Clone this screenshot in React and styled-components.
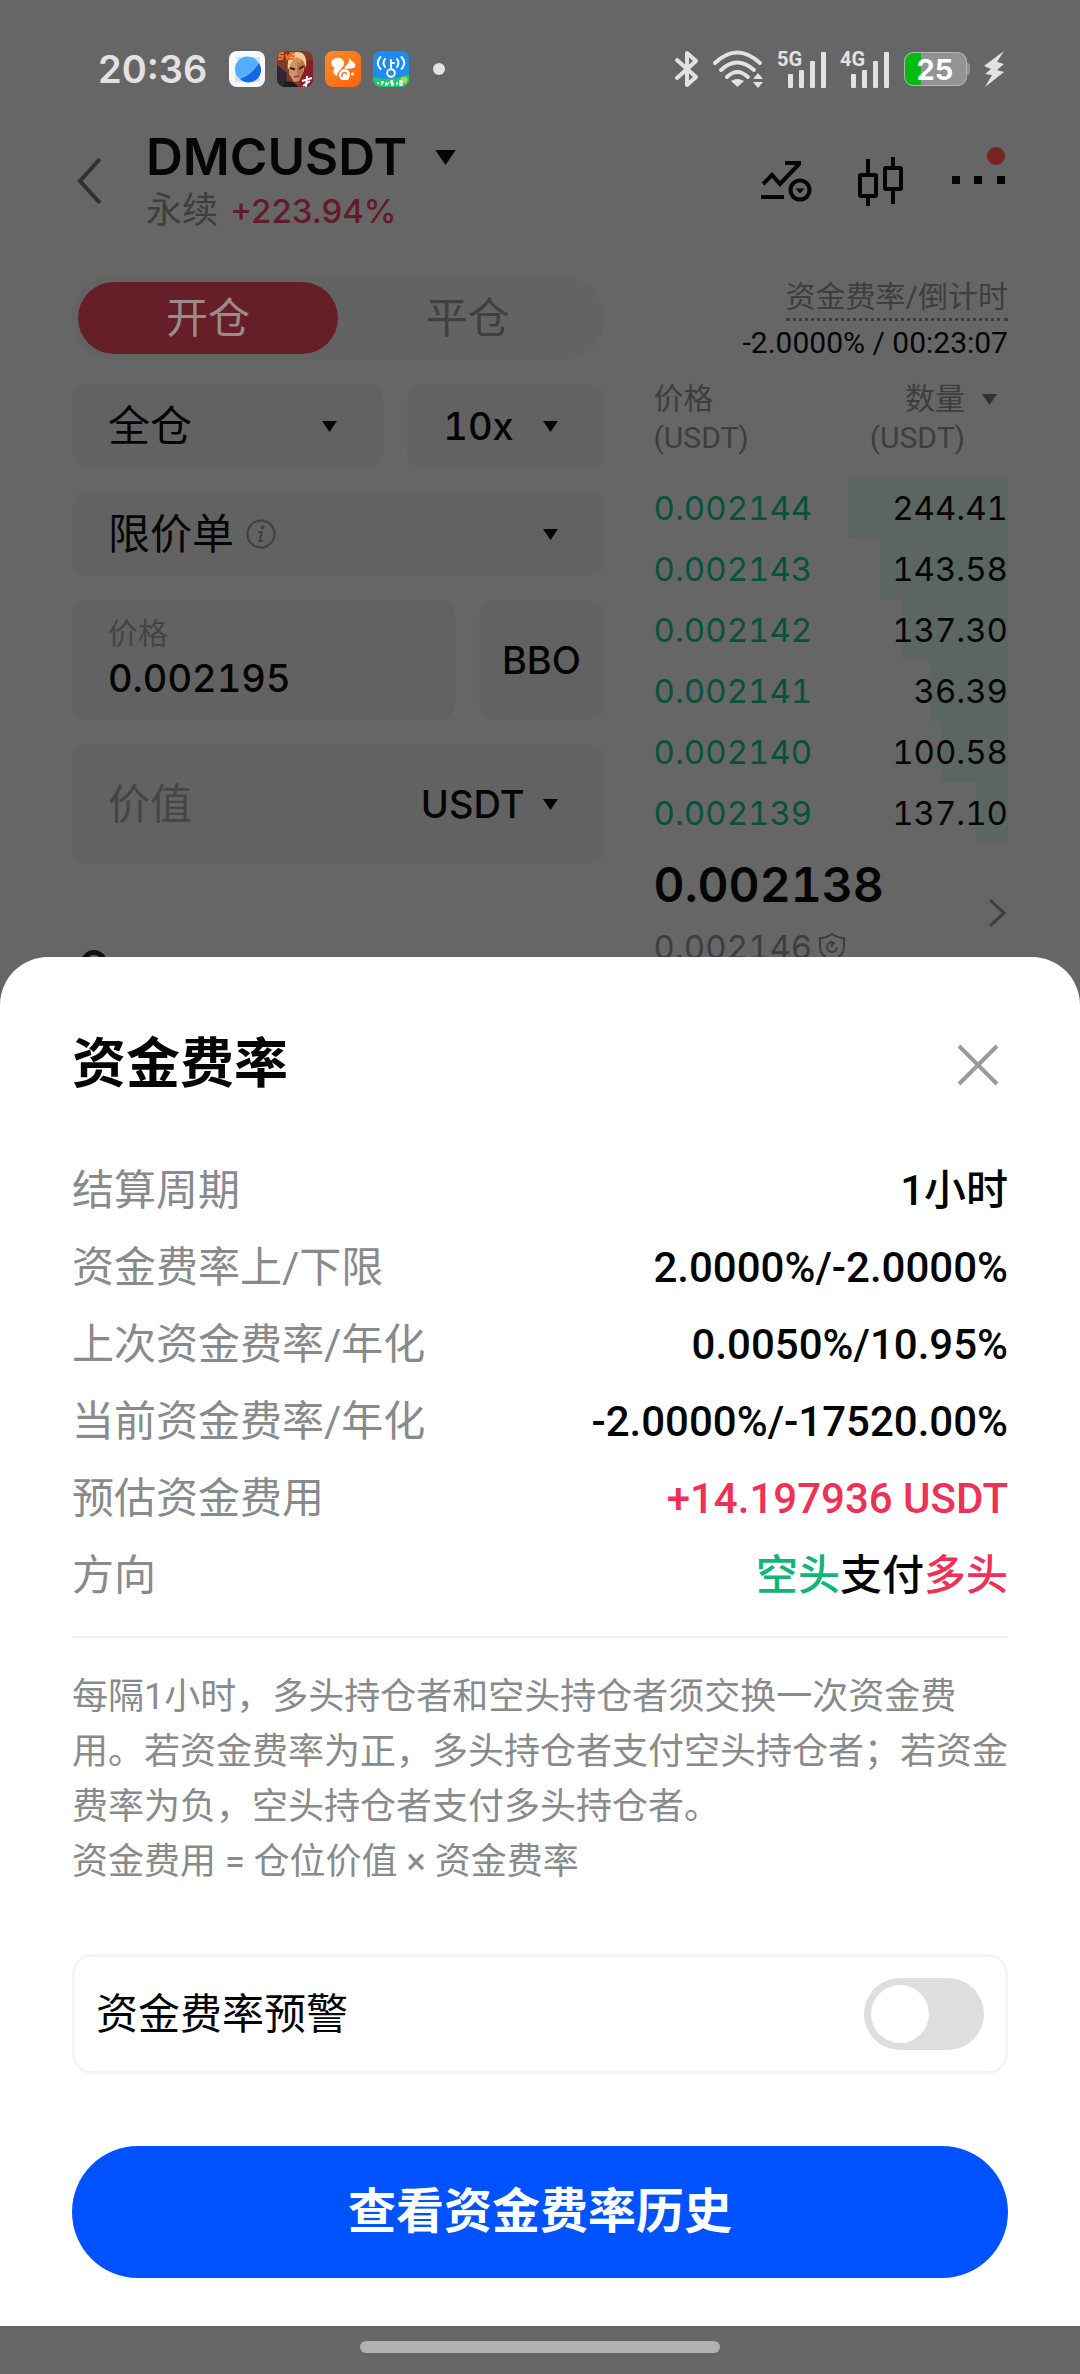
import React, { useState } from "react";
import styled, { createGlobalStyle } from "styled-components";

const GlobalStyle = createGlobalStyle`
  * {
    box-sizing: border-box;
  }
  body {
    margin: 0;
    background: #666666;
    font-family: Roboto, "Noto Sans CJK SC", sans-serif;
    color: #050505;
  }
  button, input {
    font-family: inherit;
    color: inherit;
    border: none;
    background: none;
    padding: 0;
    margin: 0;
  }
  h1, h2, p, dl, dd, dt {
    margin: 0;
  }
  svg {
    display: block;
    flex: none;
    overflow: visible;
  }
`;

const Page = styled.div`
  min-height: 100vh;
  overflow: hidden;
`;

/* status bar */

const StatusBar = styled.div`
  display: flex;
  justify-content: space-between;
  align-items: center;
  height: 116px;
  padding: 22px 76px 0 98px;
  color: #e2e2e2;
`;

const StatusGroup = styled.div`
  display: flex;
  align-items: center;
  gap: ${(props) => props.$gap}px;
`;

const Time = styled.span`
  font-family: Inter, sans-serif;
  font-size: 38px;
  font-weight: 600;
  margin-right: 10px;
`;

const Dot = styled.span`
  width: 12px;
  height: 12px;
  margin-left: 12px;
  border-radius: 50%;
  background: #e2e2e2;
`;

/* header */

const Header = styled.header`
  display: flex;
  align-items: center;
  height: 130px;
  padding: 0 74px 0 72px;
`;

const IconButton = styled.button`
  display: flex;
  cursor: pointer;
`;

const Pair = styled.div`
  flex: 1;
  padding-left: 38px;
`;

const PairName = styled.h1`
  display: flex;
  align-items: center;
  gap: 28px;
  font-family: Inter, sans-serif;
  font-size: 51px;
  font-weight: 600;
  line-height: 60px;
`;

const PairInfo = styled.p`
  display: flex;
  gap: 12px;
  font-size: 36px;
  line-height: 48px;
  color: #3c3e3f;
`;

const Change = styled.span`
  font-family: Inter, sans-serif;
  font-size: 33px;
  font-weight: 500;
  color: #641a2b;
`;

const HeaderIcons = styled.div`
  display: flex;
  align-items: center;
  gap: 46px;
`;

/* trade area */

const Trade = styled.main`
  display: grid;
  grid-template-columns: minmax(0, 3fr) minmax(0, 2fr);
  column-gap: 50px;
  padding: 30px 72px 0;
`;

const Form = styled.div`
  display: flex;
  flex-direction: column;
  gap: 24px;
`;

const Tabs = styled.div`
  display: flex;
  padding: 6px;
  border-radius: 42px;
  background: #636363;
`;

const Tab = styled.button`
  flex: 1;
  height: 72px;
  border-radius: 36px;
  font-size: 42px;
  line-height: 53px;
  background: ${(props) => (props.$active ? "#661e28" : "none")};
  color: ${(props) => (props.$active ? "#9a8b8c" : "#3e4041")};
`;

const FormRow = styled.div`
  display: grid;
  grid-template-columns: ${(props) => props.$cols};
  gap: 24px;
`;

const Field = styled.button`
  display: flex;
  align-items: center;
  justify-content: space-between;
  height: 84px;
  padding: 0 46px 0 36px;
  border-radius: 16px;
  background: #626262;
  font-size: 42px;
  line-height: 53px;
`;

const FieldText = styled.span`
  display: flex;
  align-items: center;
  gap: 12px;
`;

const Latin = styled.span`
  font-family: Inter, sans-serif;
  font-size: 38px;
  font-weight: 500;
  font-feature-settings: "tnum";
`;

const InputBox = styled.label`
  display: flex;
  flex-direction: column;
  justify-content: center;
  height: 120px;
  padding: 0 36px;
  border-radius: 16px;
  background: #626262;
  font-size: 30px;
  line-height: 36px;
  color: #434646;
`;

const PriceInput = styled.input`
  width: 100%;
  height: 52px;
  font-family: Inter, sans-serif;
  font-size: 38px;
  font-weight: 500;
  font-feature-settings: "tnum";
  line-height: 52px;
  color: #050505;
`;

const BboButton = styled.button`
  border-radius: 16px;
  background: #626262;
`;

const AmountBox = styled.div`
  display: flex;
  align-items: center;
  height: 120px;
  padding: 0 46px 0 36px;
  border-radius: 16px;
  background: #626262;
`;

const AmountInput = styled.input`
  flex: 1;
  min-width: 0;
  font-size: 42px;
  &::placeholder {
    color: #434646;
    opacity: 1;
  }
`;

const Unit = styled.button`
  display: flex;
  align-items: center;
  gap: 18px;
`;

const Slider = styled.input`
  appearance: none;
  width: 100%;
  height: 26px;
  margin-top: 62px;
  padding: 0 9px;
  &::-webkit-slider-thumb {
    appearance: none;
    width: 26px;
    height: 26px;
    border: 5px solid #111111;
    border-radius: 50%;
    background: #666666;
  }
`;

/* order book */

const Book = styled.div`
  display: flex;
  flex-direction: column;
`;

const Funding = styled.div`
  display: flex;
  flex-direction: column;
  align-items: flex-end;
  font-size: 30px;
  line-height: 36px;
`;

const FundingLink = styled.a`
  margin-bottom: 4px;
  border-bottom: 3px dotted #3c3e3f;
  color: #3c3e3f;
  line-height: 42px;
  text-decoration: none;
`;

const BookTable = styled.table`
  width: 100%;
  margin-top: 18px;
  border-collapse: collapse;
`;

const HeadCell = styled.th`
  padding: 0 0 20px;
  font-size: 30px;
  font-weight: 400;
  line-height: 39px;
  vertical-align: top;
  text-align: left;
  color: #3c3e3f;
`;

const SortButton = styled.button`
  display: flex;
  gap: 17px;
  margin-left: auto;
  padding-right: 11px;
  font-size: 30px;
  line-height: 39px;
  text-align: right;
  svg {
    margin-top: 15px;
  }
`;

const BookRow = styled.tr`
  height: 61px;
  background: linear-gradient(#5b6561, #5b6561) right / 0 100% no-repeat;
  font-family: Inter, sans-serif;
  font-size: 33px;
  font-feature-settings: "tnum";
`;

const Cell = styled.td`
  padding: 0;
  text-align: ${(props) => (props.$right ? "right" : "left")};
  color: ${(props) => (props.$right ? "#050505" : "#06523a")};
`;

const LastPrice = styled.div`
  display: flex;
  align-items: center;
  justify-content: space-between;
  padding-top: 8px;
`;

const Last = styled.p`
  font-family: Inter, sans-serif;
  font-size: 48px;
  font-weight: 600;
  font-feature-settings: "tnum";
  line-height: 68px;
`;

const Mark = styled.p`
  display: flex;
  align-items: center;
  gap: 6px;
  font-family: Inter, sans-serif;
  font-size: 33px;
  font-feature-settings: "tnum";
  line-height: 56px;
  color: #3c3e3f;
`;

/* bottom sheet */

const SheetLayer = styled.div`
  position: fixed;
  left: 0;
  right: 0;
  bottom: 0;
  background: #666666;
  border-radius: 48px 48px 0 0;
`;

const Sheet = styled.section`
  padding: 74px 72px 48px;
  border-radius: 48px 48px 0 0;
  background: #ffffff;
`;

const SheetHead = styled.div`
  display: flex;
  align-items: center;
  justify-content: space-between;
  padding-right: 9px;
`;

const SheetTitle = styled.h2`
  font-size: 54px;
  font-weight: 700;
  line-height: 68px;
`;

const Rows = styled.dl`
  display: flex;
  flex-direction: column;
  gap: 24px;
  padding: 65px 0 34px;
  border-bottom: 2px solid #f1f1f1;
`;

const Row = styled.div`
  display: flex;
  justify-content: space-between;
  font-size: 42px;
  line-height: 53px;
`;

const Label = styled.dt`
  color: #888a8b;
`;

const Value = styled.dd`
  font-weight: 500;
  color: ${(props) => (props.$up ? "#ee3157" : "#050505")};
`;

const Side = styled.span`
  color: ${(props) => (props.$short ? "#12b47c" : "#ee3157")};
`;

const Note = styled.p`
  margin-top: 32px;
  font-size: 36px;
  line-height: 55px;
  color: #888a8b;
`;

const AlertCard = styled.label`
  display: flex;
  align-items: center;
  justify-content: space-between;
  height: 120px;
  margin-top: 64px;
  padding: 0 21px;
  border: 3px solid #f4f5f5;
  border-radius: 20px;
  font-size: 42px;
  line-height: 53px;
  cursor: pointer;
`;

const Switch = styled.input`
  appearance: none;
  display: flex;
  width: 120px;
  height: 72px;
  padding: 7px;
  border-radius: 36px;
  background: ${(props) => (props.checked ? "#0052ff" : "#dcdee0")};
  &::before {
    content: "";
    width: 58px;
    height: 58px;
    border-radius: 50%;
    background: #ffffff;
    margin-left: ${(props) => (props.checked ? "auto" : "0")};
  }
`;

const HistoryButton = styled.button`
  width: 100%;
  height: 132px;
  margin-top: 72px;
  border-radius: 66px;
  background: #0052ff;
  color: #ffffff;
  font-size: 48px;
  font-weight: 700;
  line-height: 60px;
`;

const HomeBar = styled.div`
  display: flex;
  justify-content: center;
  height: 48px;
  padding-top: 15px;
  &::before {
    content: "";
    width: calc(100% / 3);
    height: 12px;
    border-radius: 6px;
    background: #b2b2b2;
  }
`;

/* icons */

const Caret = ({ w = 15, color = "#050505" }) => (
  <svg width={w} height={Math.round(w * 0.73)} viewBox="0 0 15 11">
    <path d="M0 0H15L7.5 11Z" fill={color} />
  </svg>
);

const BrowserIcon = () => (
  <svg width="36" height="36" viewBox="0 0 36 36">
    <rect width="36" height="36" rx="8" fill="#f6faff" />
    <path d="M6 6H15V15ZM31 31H22L30 22ZM6 31V20L15 31ZM31 6V16L22 6Z" fill="#cfe5fd" />
    <circle cx="18.500" cy="18" r="12.500" fill="#57aef8" />
    <path d="M30 12A12.500 12.500 0 0 1 11 28Q23 24 30 12Z" fill="#1766e6" />
  </svg>
);

const GameIcon = () => (
  <svg width="36" height="36" viewBox="0 0 36 36">
    <clipPath id="game">
      <rect width="36" height="36" rx="8" />
    </clipPath>
    <g clipPath="url(#game)">
      <rect width="36" height="36" fill="#7d3b26" />
      <path d="M0 14L10 22L9 36H0Z" fill="#2b2534" />
      <path d="M27 12L36 8V36H22Z" fill="#8a1c26" />
      <path d="M12 9Q20 2 28 9L27 20L22 30L17 31L12 23Z" fill="#d09068" />
      <path d="M20 12L27 10L26 21L21 30L20 22Z" fill="#b97450" />
      <path d="M11 19Q9 5 19 1Q31 0 29 17L26 9L19 6L14 12Z" fill="#ecd096" />
      <path d="M13 17L18 18.500M22 18L27 15" stroke="#3d1a14" strokeWidth="2" />
      <path d="M17 26L22 25" stroke="#8c3f33" strokeWidth="1.500" />
      <path d="M8 30L16 31L22 36H6Z" fill="#1c1a22" />
      <path d="M7 2H3L2 5H6L5 8H1M9 3L10 8L13 3M18 2H14L13 5H17L16 8H12" stroke="#f5702a" strokeWidth="1.800" fill="none" />
      <path d="M25 30L35 27M30 25L29 36M26 35L33 30" stroke="#ffffff" strokeWidth="2" />
    </g>
  </svg>
);

const SquirrelIcon = () => (
  <svg width="36" height="36" viewBox="0 0 36 36">
    <linearGradient id="squirrel" x1="0" y1="0" x2="1" y2="1">
      <stop offset="0" stopColor="#ff8a2a" />
      <stop offset="1" stopColor="#ff6210" />
    </linearGradient>
    <rect width="36" height="36" rx="8" fill="url(#squirrel)" />
    <g fill="#ffffff">
      <path d="M10 17C5 15 5 8 11 7C16 6 20 9 19 14C17 18 13 19 12 25C8 23 7 20 10 17Z" />
      <path d="M19 17L24 11V7L27 10C30 12 31 14 30 16C28 18 25 17 22 18Z" />
      <path d="M14 24C14 18 21 16 24 20C26 23 25 26 23 29H17C15 28 14 26 14 24Z" />
      <circle cx="27.500" cy="23" r="1.500" />
    </g>
    <path d="M17 26C16 22 20 20 22 23" stroke="#ff7a1c" strokeWidth="1.500" fill="none" />
  </svg>
);

const WifiKeyIcon = () => (
  <svg width="36" height="36" viewBox="0 0 36 36">
    <clipPath id="key">
      <rect width="36" height="36" rx="8" />
    </clipPath>
    <g clipPath="url(#key)">
      <rect width="36" height="36" fill="#1b8df0" />
      <path d="M0 26Q18 31 36 23V36H0Z" fill="#25c46c" />
      <circle cx="31" cy="29" r="3.500" fill="#a5d84c" />
      <g stroke="#ffffff" strokeWidth="2" fill="none" strokeLinecap="round">
        <circle cx="18" cy="22" r="3.800" />
        <path d="M18 18V9M18 12H21" />
        <path d="M12 8Q9 12 12 16M7.500 6Q2 12 7.500 18M24 8Q27 12 24 16M28.500 6Q34 12 28.500 18" />
      </g>
      <path d="M4 32H6M9 31V34M8 31H11M13 31V35M16 31L14 34M20 30H18V32H20V34H18M24 31V34M27 30H29V34H27Z" stroke="#ffffff" strokeWidth="1.300" fill="none" />
    </g>
  </svg>
);

const BluetoothIcon = () => (
  <svg width="24" height="38" viewBox="0 0 24 38">
    <path d="M2 10L21 27L12 35V3L21 11L2 28" fill="none" stroke="#e2e2e2" strokeWidth="4" strokeLinejoin="round" strokeLinecap="round" />
  </svg>
);

const WifiIcon = () => (
  <svg width="51" height="38" viewBox="0 0 51 38">
    <g fill="none" stroke="#e2e2e2" strokeWidth="4" strokeLinecap="round">
      <path d="M2 13Q24 -8 47 13" />
      <path d="M8 20Q24 5 41 20" />
      <path d="M14 27Q24 17 35 27" />
    </g>
    <path d="M18 31Q24 27 31 31L24.500 37Z" fill="#e2e2e2" />
    <path d="M40 29L45 23L50 29ZM40 32H50L45 38Z" fill="#e2e2e2" />
  </svg>
);

const SignalText = styled.text`
  font-family: Roboto, sans-serif;
  font-size: 20px;
  font-weight: 700;
`;

const SignalIcon = ({ label }) => (
  <svg width="49" height="38" viewBox="0 0 49 38" fill="#e2e2e2">
    <SignalText x="-1" y="16">
      {label}
    </SignalText>
    <rect x="10" y="24" width="5" height="14" rx="1" />
    <rect x="21" y="20" width="5" height="18" rx="1" />
    <rect x="32" y="11" width="5" height="27" rx="1" />
    <rect x="43" y="2" width="5" height="36" rx="1" />
  </svg>
);

const BatteryText = styled.text`
  font-family: Inter, sans-serif;
  font-size: 29px;
  font-weight: 700;
`;

const BatteryIcon = () => (
  <svg width="66" height="34" viewBox="0 0 66 34">
    <clipPath id="cell">
      <rect width="63" height="34" rx="9" />
    </clipPath>
    <rect width="63" height="34" rx="9" fill="#939393" />
    <path d="M63 11Q66 11 66 14V20Q66 23 63 23Z" fill="#939393" />
    <rect width="17" height="34" fill="#03bb12" clipPath="url(#cell)" />
    <rect x="0.500" y="0.500" width="62" height="33" rx="9" fill="none" stroke="#b4b4b4" />
    <BatteryText x="31" y="28" textAnchor="middle" fill="#ffffff">
      25
    </BatteryText>
  </svg>
);

const BoltIcon = () => (
  <svg width="20" height="36" viewBox="0 0 20 36">
    <path d="M20 0L0 15L7 18L1 23L8 24L1 36L20 21L13 19L20 13L13 11Z" fill="#e2e2e2" />
  </svg>
);

const BackIcon = () => (
  <svg width="36" height="48" viewBox="0 0 36 48">
    <path d="M28 2L8 24L28 46" fill="none" stroke="#2f3132" strokeWidth="4" />
  </svg>
);

const TrendIcon = () => (
  <svg width="52" height="50" viewBox="0 0 52 50" fill="none" stroke="#050505" strokeWidth="4">
    <path d="M3 28L12 19L20 28L40 7M25 7H41" />
    <path d="M1 41H24" />
    <circle cx="40" cy="34" r="9.500" />
    <path d="M35.500 32.500H44.500L40 37.500Z" fill="#050505" stroke="none" />
  </svg>
);

const CandleIcon = () => (
  <svg width="46" height="50" viewBox="0 0 46 50" fill="none" stroke="#050505" strokeWidth="4">
    <rect x="2" y="19" width="16" height="21" rx="1" />
    <rect x="27" y="12" width="16" height="21" rx="1" />
    <path d="M10 3V19M10 40V50M35 1V12M35 33V48" />
  </svg>
);

const MoreIcon = () => (
  <svg width="56" height="50" viewBox="0 0 56 50">
    <path d="M2 20H10V28H2ZM24 20H32V28H24ZM47 20H55V28H47Z" fill="#050505" />
    <circle cx="46" cy="0" r="9" fill="#762522" />
  </svg>
);

const InfoIcon = () => (
  <svg width="30" height="30" viewBox="0 0 30 30" fill="none" stroke="#3e4041" strokeWidth="2">
    <circle cx="15" cy="15" r="13.500" />
    <path d="M12 13H16L13.500 22H17" />
    <circle cx="16.500" cy="8.500" r="1" />
  </svg>
);

const ChevronIcon = () => (
  <svg width="20" height="30" viewBox="0 0 20 30">
    <path d="M2 2L16 15L2 28" fill="none" stroke="#3c3e3f" strokeWidth="3" />
  </svg>
);

const ShieldIcon = () => (
  <svg width="28" height="30" viewBox="0 0 28 30" fill="none" stroke="#3c3e3f" strokeWidth="2">
    <path d="M14 2Q20 6 26 6V15Q26 24 14 29Q2 24 2 15V6Q8 6 14 2Z" />
    <path d="M14 10A5 5 0 1 0 19 15M14 15V10L17 12" />
  </svg>
);

const CloseIcon = () => (
  <svg width="42" height="42" viewBox="0 0 42 42">
    <path d="M2 2L40 40M40 2L2 40" stroke="#999b9c" strokeWidth="4" />
  </svg>
);

const bids = [
  { price: "0.002144", qty: "244.41", depth: 45 },
  { price: "0.002143", qty: "143.58", depth: 36 },
  { price: "0.002142", qty: "137.30", depth: 30 },
  { price: "0.002141", qty: "36.39", depth: 22 },
  { price: "0.002140", qty: "100.58", depth: 19 },
  { price: "0.002139", qty: "137.10", depth: 9 },
];

const details = [
  { label: "结算周期", value: "1小时" },
  { label: "资金费率上/下限", value: "2.0000%/-2.0000%" },
  { label: "上次资金费率/年化", value: "0.0050%/10.95%" },
  { label: "当前资金费率/年化", value: "-2.0000%/-17520.00%" },
  { label: "预估资金费用", value: "+14.197936 USDT", up: true },
];

export default function App() {
  const [price, setPrice] = useState("0.002195");
  const [alert, setAlert] = useState(false);

  return (
    <>
      <GlobalStyle />
      <Page>
        <StatusBar>
          <StatusGroup $gap={12}>
            <Time>20:36</Time>
            <BrowserIcon />
            <GameIcon />
            <SquirrelIcon />
            <WifiKeyIcon />
            <Dot />
          </StatusGroup>
          <StatusGroup $gap={14}>
            <BluetoothIcon />
            <WifiIcon />
            <SignalIcon label="5G" />
            <SignalIcon label="4G" />
            <BatteryIcon />
            <BoltIcon />
          </StatusGroup>
        </StatusBar>

        <Header>
          <IconButton aria-label="返回">
            <BackIcon />
          </IconButton>
          <Pair>
            <PairName>
              DMCUSDT
              <Caret w={21} />
            </PairName>
            <PairInfo>
              永续 <Change>+223.94%</Change>
            </PairInfo>
          </Pair>
          <HeaderIcons>
            <IconButton aria-label="走势">
              <TrendIcon />
            </IconButton>
            <IconButton aria-label="K线">
              <CandleIcon />
            </IconButton>
            <IconButton aria-label="更多">
              <MoreIcon />
            </IconButton>
          </HeaderIcons>
        </Header>

        <Trade>
          <Form>
            <Tabs>
              <Tab $active>开仓</Tab>
              <Tab>平仓</Tab>
            </Tabs>
            <FormRow $cols="311fr 196fr">
              <Field>
                全仓 <Caret />
              </Field>
              <Field>
                <Latin>10x</Latin> <Caret />
              </Field>
            </FormRow>
            <Field>
              <FieldText>
                限价单 <InfoIcon />
              </FieldText>
              <Caret />
            </Field>
            <FormRow $cols="382fr 124fr">
              <InputBox>
                价格
                <PriceInput value={price} onChange={(e) => setPrice(e.target.value)} />
              </InputBox>
              <BboButton>
                <Latin>BBO</Latin>
              </BboButton>
            </FormRow>
            <AmountBox>
              <AmountInput placeholder="价值" aria-label="价值" />
              <Unit>
                <Latin>USDT</Latin> <Caret />
              </Unit>
            </AmountBox>
            <Slider type="range" min="0" max="100" step="25" defaultValue="0" aria-label="仓位比例" />
          </Form>

          <Book>
            <Funding>
              <FundingLink href="#funding">资金费率/倒计时</FundingLink>
              -2.0000% / 00:23:07
            </Funding>
            <BookTable>
              <thead>
                <tr>
                  <HeadCell>
                    价格
                    <br />
                    (USDT)
                  </HeadCell>
                  <HeadCell>
                    <SortButton>
                      <span>
                        数量
                        <br />
                        (USDT)
                      </span>
                      <Caret color="#303233" />
                    </SortButton>
                  </HeadCell>
                </tr>
              </thead>
              <tbody>
                {bids.map((bid) => (
                  <BookRow key={bid.price} style={{ backgroundSize: `${bid.depth}% 100%` }}>
                    <Cell>{bid.price}</Cell>
                    <Cell $right>{bid.qty}</Cell>
                  </BookRow>
                ))}
              </tbody>
            </BookTable>
            <LastPrice>
              <div>
                <Last>0.002138</Last>
                <Mark>
                  0.002146
                  <ShieldIcon />
                </Mark>
              </div>
              <ChevronIcon />
            </LastPrice>
          </Book>
        </Trade>
      </Page>

      <SheetLayer id="funding">
        <Sheet>
          <SheetHead>
            <SheetTitle>资金费率</SheetTitle>
            <IconButton aria-label="关闭">
              <CloseIcon />
            </IconButton>
          </SheetHead>
          <Rows>
            {details.map((item) => (
              <Row key={item.label}>
                <Label>{item.label}</Label>
                <Value $up={item.up}>{item.value}</Value>
              </Row>
            ))}
            <Row>
              <Label>方向</Label>
              <Value>
                <Side $short>空头</Side>支付<Side>多头</Side>
              </Value>
            </Row>
          </Rows>
          <Note>
            每隔1小时，多头持仓者和空头持仓者须交换一次资金费用。若资金费率为正，多头持仓者支付空头持仓者；若资金费率为负，空头持仓者支付多头持仓者。
            <br />
            资金费用 = 仓位价值 × 资金费率
          </Note>
          <AlertCard>
            资金费率预警
            <Switch type="checkbox" role="switch" checked={alert} onChange={(e) => setAlert(e.target.checked)} />
          </AlertCard>
          <HistoryButton>查看资金费率历史</HistoryButton>
        </Sheet>
        <HomeBar />
      </SheetLayer>
    </>
  );
}
